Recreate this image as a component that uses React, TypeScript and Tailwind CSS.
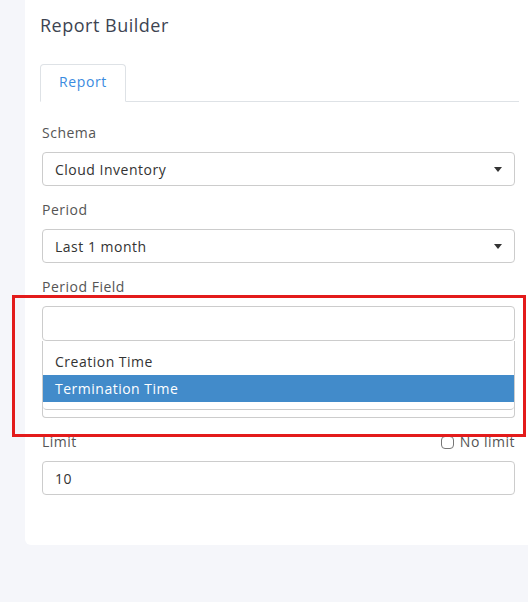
function Caret() {
  return (
    <svg width="8" height="5" viewBox="0 0 8 5" className="shrink-0">
      <path d="M0 0h8L4 5z" fill="#333" />
    </svg>
  );
}

function SelectBox({ value }: { value: string }) {
  return (
    <div className="flex h-[34px] items-center justify-between rounded border border-[#ccc] bg-white pl-3 pr-3 text-[14px] tracking-[0.5px] text-[#333]">
      <span>{value}</span>
      <Caret />
    </div>
  );
}

export default function App() {
  return (
    <div
      className="min-h-[602px] bg-[#f5f6fa] pl-[25px]"
      style={{ fontFamily: '"Open Sans", "Liberation Sans", sans-serif' }}
    >
      <div className="h-[545px] rounded-bl-md bg-white pl-[15px] pr-[9px]">
        <h1 className="pt-[13px] text-[18px] leading-6 tracking-[0.5px] text-[#3d4451]">Report Builder</h1>

        <div className="mt-[27px] flex items-end border-b border-[#dee2e6]">
          <div className="-mb-px flex h-[38px] w-[86px] items-center justify-center rounded-t border border-b-white border-[#dee2e6] bg-white pb-[3px] text-[14px] tracking-[0.6px] text-[#3a8be0]">
            Report
          </div>
        </div>

        <div className="pl-[2px] pr-[4px] tracking-[0.5px]">
          <div className="mt-[21px] text-[14px] leading-5 text-[#555]">Schema</div>
          <div className="mt-[9px]">
            <SelectBox value="Cloud Inventory" />
          </div>

          <div className="mt-[14px] text-[14px] leading-5 text-[#555]">Period</div>
          <div className="mt-[9px]">
            <SelectBox value="Last 1 month" />
          </div>

          <div className="mt-[14px] text-[14px] leading-5 text-[#555]">Period Field</div>
          <div className="relative mt-[9px]">
            <div className="pointer-events-none absolute -left-[30px] -right-[11px] -top-[11px] h-[142px] border-[3px] border-[#e31b1b]" />
            <div className="h-[35px] rounded border border-[#ccc] bg-white" />
            <div className="h-[77px] rounded-b border border-t-0 border-[#ccc] bg-white">
              <div className="h-[69px] rounded-b border-b border-[#ccc] pt-[7px] text-[14px] text-[#333]">
                <div className="flex h-[27px] items-center pl-3">Creation Time</div>
                <div className="flex h-[27px] items-center bg-[#428bca] pl-3 text-white">Termination Time</div>
              </div>
            </div>
          </div>

          <div className="mt-[14px] flex items-center justify-between text-[14px] leading-5 text-[#555]">
            <span>Limit</span>
            <label className="flex items-center gap-[6px]">
              <span className="h-[13px] w-[13px] rounded-sm border border-[#767676] bg-white" />
              <span>No limit</span>
            </label>
          </div>
          <div className="mt-[9px] flex h-[34px] items-center rounded border border-[#ccc] bg-white pl-3 text-[14px] text-[#333]">
            10
          </div>
        </div>
      </div>
    </div>
  );
}
